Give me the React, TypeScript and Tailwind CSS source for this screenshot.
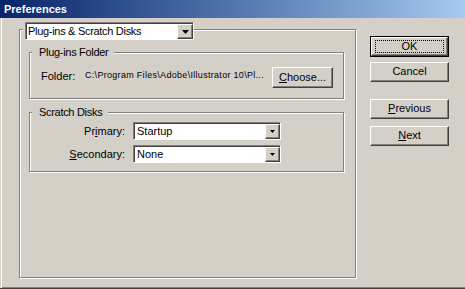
import type { ReactNode } from "react";

const raised =
  "bg-[#d4d0c8] border border-t-white border-l-white border-r-[#404040] border-b-[#404040] shadow-[inset_-1px_-1px_0_#808080]";

const sunken =
  "bg-white border border-t-[#808080] border-l-[#808080] border-r-white border-b-white shadow-[inset_1px_1px_0_#404040]";

function Arrow({ small }: { small?: boolean }) {
  return (
    <div className={`${raised} flex h-full items-center justify-center ${small ? "w-[15px]" : "w-[16px]"}`}>
      {small ? (
        <svg width="5" height="3" viewBox="0 0 5 3">
          <path d="M0 0h5L2.5 3z" fill="#000" />
        </svg>
      ) : (
        <svg width="7" height="4" viewBox="0 0 7 4">
          <path d="M0 0h7L3.5 4z" fill="#000" />
        </svg>
      )}
    </div>
  );
}

function Select({ value }: { value: string }) {
  return (
    <div className={`${sunken} flex h-[18px] w-[148px] items-stretch pt-[1px] pl-[1px]`}>
      <span className="flex-1 pl-[2px] leading-[15px]">{value}</span>
      <Arrow small />
    </div>
  );
}

function Group({
  label,
  className,
  children,
}: {
  label: string;
  className: string;
  children: ReactNode;
}) {
  return (
    <div
      className={`relative ml-[9px] w-[315px] border border-[#808080] shadow-[inset_1px_1px_0_#fff,1px_1px_0_#fff] ${className}`}
    >
      <span className="absolute left-[2px] top-[-7px] bg-[#d4d0c8] pl-[7px] pr-[6px] leading-[13px] tracking-[-0.3px]">
        {label}
      </span>
      {children}
    </div>
  );
}

// size classes come from the caller so they never clash
function Button({ children, className }: { children: ReactNode; className: string }) {
  return (
    <div className={`${raised} flex items-center justify-center pb-[1px] ${className}`}>
      {children}
    </div>
  );
}

export default function App() {
  return (
    <div className="flex h-[289px] w-[465px] flex-col overflow-hidden bg-[#d4d0c8] font-['Liberation_Sans',Arial,sans-serif] text-[11px] text-black">
      <div className="flex h-[18px] items-center bg-linear-to-r from-[#0a246a] to-[#a6caf0] pl-[4px] text-[11px] font-bold text-white">
        Preferences
      </div>

      <div className="flex flex-1 border-b border-b-[#404040] shadow-[inset_1px_0_0_#d4d0c8,inset_2px_0_0_#fff,inset_0_-1px_0_#808080]">
        <div className="relative ml-[19px] mt-[11px] h-[249px] w-[337px] border border-[#808080] shadow-[inset_1px_1px_0_#fff,1px_1px_0_#fff]">
          <div className="absolute left-[3px] top-[-8px] bg-[#d4d0c8] pl-[2px]">
            <div className={`${sunken} flex h-[18px] w-[169px] items-stretch pt-[1px] pl-[1px]`}>
              <span className="flex-1 pl-[1px] leading-[15px] tracking-[-0.3px]">Plug-ins &amp; Scratch Disks</span>
              <Arrow />
            </div>
          </div>

          <Group label="Plug-ins Folder" className="mt-[22px] h-[47px]">
            <div className="mt-[14px] flex h-[21px] items-center pl-[11px]">
              <span className="w-[44px] pb-[3px]">Folder:</span>
              <span className="w-[187px] whitespace-nowrap pb-[3px] text-[9px] tracking-[0.3px]">
                C:\Program Files\Adobe\Illustrator 10\Pl...
              </span>
              <Button className="h-[21px] w-[61px]">
                <span>
                  <u>C</u>hoose...
                </span>
              </Button>
            </div>
          </Group>

          <Group label="Scratch Disks" className="mt-[13px] h-[60px]">
            <div className="mt-[9px] flex flex-col gap-[5px]">
              <div className="flex items-center">
                <span className="w-[96px] pr-[1px] text-right">
                  Pr<u>i</u>mary:
                </span>
                <div className="ml-[7px]">
                  <Select value="Startup" />
                </div>
              </div>
              <div className="flex items-center">
                <span className="w-[96px] pr-[1px] text-right">
                  <u>S</u>econdary:
                </span>
                <div className="ml-[7px]">
                  <Select value="None" />
                </div>
              </div>
            </div>
          </Group>
        </div>

        <div className="ml-[14px] flex flex-col pt-[18px]">
          <div className="relative h-[21px] w-[79px] border border-black">
            <div className={`${raised} flex h-full w-full items-center justify-center pb-[1px]`}>OK</div>
            <div className="absolute bottom-[3px] left-[4px] right-[4px] top-[3px] border border-dotted border-black" />
          </div>
          <Button className="mt-[5px] h-[20px] w-[79px]">Cancel</Button>
          <Button className="mt-[17px] h-[20px] w-[79px]">
            <span>
              <u>P</u>revious
            </span>
          </Button>
          <Button className="mt-[7px] h-[20px] w-[79px]">
            <span>
              <u>N</u>ext
            </span>
          </Button>
        </div>
      </div>
    </div>
  );
}
